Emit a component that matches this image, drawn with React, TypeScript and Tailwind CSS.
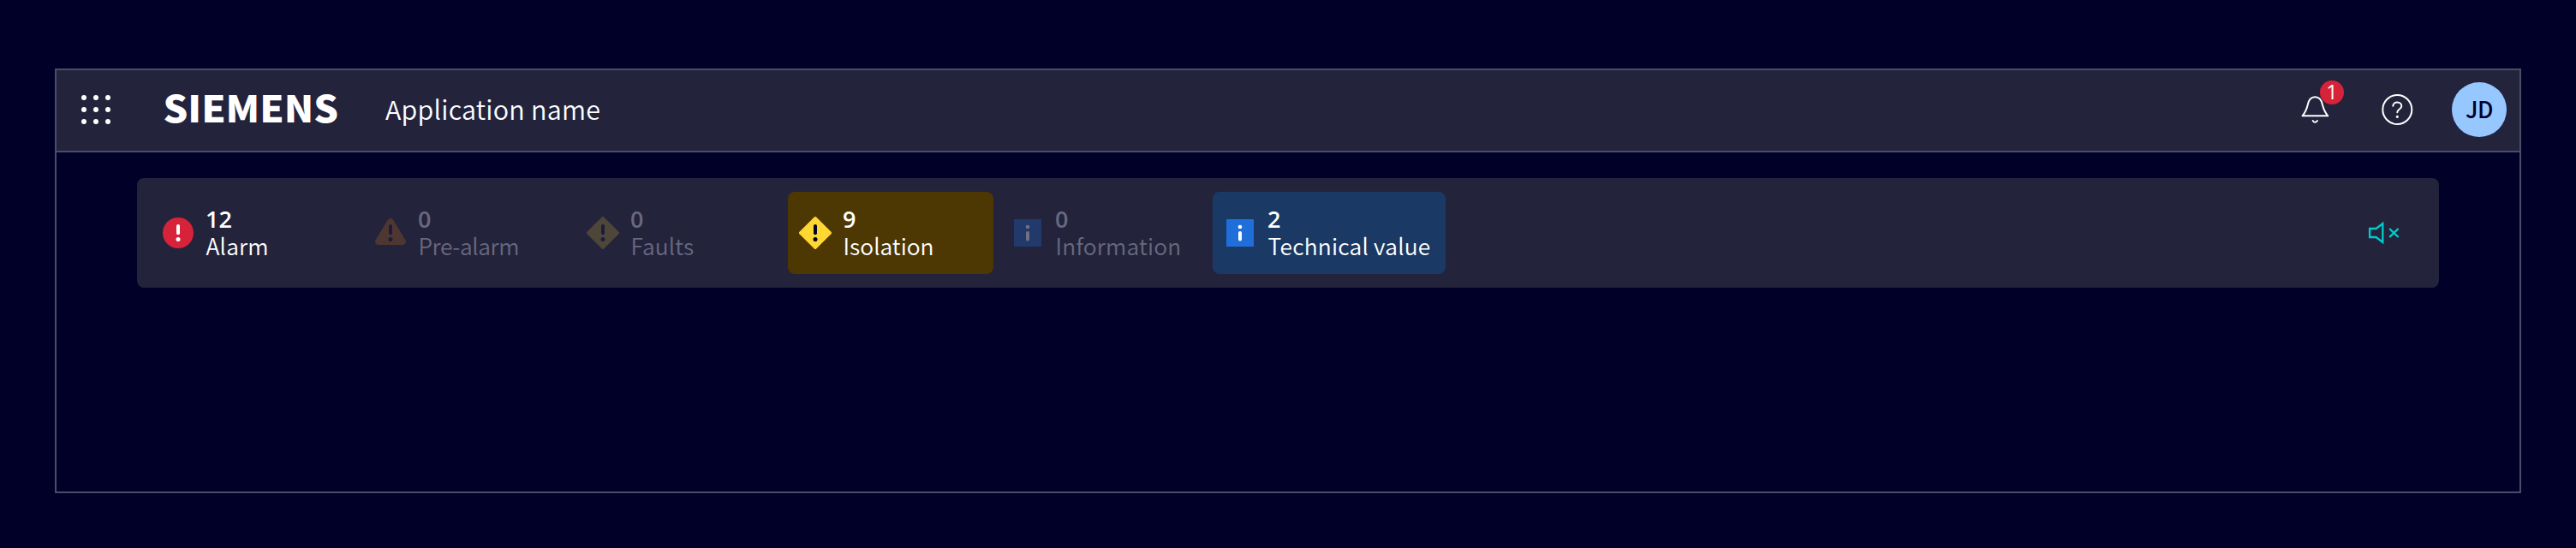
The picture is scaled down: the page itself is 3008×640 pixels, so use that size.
import type { ReactNode } from "react";

function Bang({ fill }: { fill: string }) {
  return (
    <>
      <rect x="22" y="14" width="4" height="12.3" rx="2" fill={fill} />
      <circle cx="24" cy="31.4" r="2.5" fill={fill} />
    </>
  );
}

function Icon({ children }: { children: ReactNode }) {
  return (
    <svg className="size-12 shrink-0" viewBox="0 0 48 48" fill="none">
      {children}
    </svg>
  );
}

function CircleAlert() {
  return (
    <Icon>
      <circle cx="24" cy="24" r="18" fill="#d72339" />
      <Bang fill="#ffffff" />
    </Icon>
  );
}

function TriangleAlert() {
  return (
    <Icon>
      <path
        d="M20.9 8.7a3.7 3.7 0 0 1 6.2 0l14.2 23.4c1.6 2.8 0 5.9-3.1 5.9H9.8c-3.1 0-4.7-3.1-3.1-5.9z"
        fill="#4f3731"
      />
      <Bang fill="#1e1c3a" />
    </Icon>
  );
}

function Diamond({ fill, mark }: { fill: string; mark: string }) {
  return (
    <Icon>
      <path
        d="M22.8 5.5a1.7 1.7 0 0 1 2.4 0l17.3 17.3a1.7 1.7 0 0 1 0 2.4L25.2 42.5a1.7 1.7 0 0 1-2.4 0L5.5 25.2a1.7 1.7 0 0 1 0-2.4z"
        fill={fill}
      />
      <Bang fill={mark} />
    </Icon>
  );
}

function SquareInfo({ fill, mark }: { fill: string; mark: string }) {
  return (
    <Icon>
      <rect x="8" y="8" width="32" height="32" rx="1" fill={fill} />
      <circle cx="24" cy="17" r="2.3" fill={mark} />
      <rect x="22" y="22" width="4" height="11.5" rx="2" fill={mark} />
    </Icon>
  );
}

type Tile = { icon: ReactNode; count: number; label: string; box: string; tracking: string };

const tiles: Tile[] = [
  { icon: <CircleAlert />, count: 12, label: "Alarm", box: "w-60 text-white", tracking: "tracking-[0.2px]" },
  { icon: <TriangleAlert />, count: 0, label: "Pre-alarm", box: "w-60 text-[#68687f]", tracking: "tracking-[-0.4px]" },
  { icon: <Diamond fill="#4f463a" mark="#1e1c3a" />, count: 0, label: "Faults", box: "w-60 text-[#68687f]", tracking: "tracking-[0.1px]" },
  { icon: <Diamond fill="#ffd732" mark="#000028" />, count: 9, label: "Isolation", box: "w-60 text-white bg-[#4d3702]", tracking: "tracking-normal" },
  { icon: <SquareInfo fill="#223a6b" mark="#71717f" />, count: 0, label: "Information", box: "w-60 text-[#68687f]", tracking: "tracking-[0.2px]" },
  { icon: <SquareInfo fill="#206ed9" mark="#ffffff" />, count: 2, label: "Technical value", box: "w-[272px] text-white bg-[#1a3965]", tracking: "tracking-[0.2px]" },
];

function Header() {
  return (
    <header className="flex h-24 shrink-0 items-center border-b-2 border-[#4c4c68] bg-[#23233c] pb-0.5">
      <svg className="ml-[22px] size-12" viewBox="0 0 48 48" fill="#ffffff">
        {[10, 24, 38].map((y) => [10, 24, 38].map((x) => <circle key={`${x}-${y}`} cx={x} cy={y} r="3" />))}
      </svg>
      <svg className="ml-[54px] h-[72px] w-[208px]" viewBox="0 0 208 72" role="img" aria-label="SIEMENS">
        <text
          x="0.5"
          y="51.3"
          fill="#ffffff"
          textLength="204.5"
          lengthAdjust="spacingAndGlyphs"
          className="text-[42.4px] font-black"
        >
          SIEMENS
        </text>
      </svg>
      <h1 className="ml-[52px] pb-[3px] text-[30.5px] leading-10 font-[350] tracking-[0.22px] text-white">
        Application name
      </h1>
      <div className="ml-auto flex items-center pr-[15px]">
        <div className="relative size-12">
          <svg
            className="size-12"
            viewBox="0 0 48 48"
            fill="none"
            stroke="#ffffff"
            strokeWidth="2"
            strokeLinejoin="round"
            strokeLinecap="round"
          >
            <path d="M9.5 31.3H39.3C35.5 27 34.3 23.5 33 18.5C31.8 12.5 29 9.3 24.3 9.3S16.9 12.5 15.7 18.5C14.5 23.5 13.3 27 9.5 31.3Z" />
            <path d="M21.7 37C22.6 39.3 26 39.3 26.9 37" />
          </svg>
          <span className="absolute -top-[10px] left-[30px] flex size-7 items-center justify-center rounded-full bg-[#d72339] pb-[2px] font-['Open_Sans',sans-serif] text-[23.5px] leading-7 font-normal text-white">
            1
          </span>
        </div>
        <svg className="ml-12 size-12" viewBox="0 0 48 48" fill="none" stroke="#ffffff" strokeWidth="2" strokeLinecap="round">
          <circle cx="24.3" cy="24" r="17" />
          <path d="M19.3 19.8C19.4 17.2 21.6 15.5 24.3 15.5C27.2 15.5 29.3 17.4 29.3 19.9C29.3 23.5 24.3 23.4 24.3 27.2" />
          <circle cx="24.3" cy="32.3" r="0.8" fill="#ffffff" strokeWidth="1.6" />
        </svg>
        <div className="ml-10 flex size-16 items-center justify-center rounded-full bg-[#97c7ff] pb-[2px] text-[26.4px] leading-8 font-medium tracking-[-0.5px] text-[#000028]">
          JD
        </div>
      </div>
    </header>
  );
}

export default function App() {
  return (
    <div className="h-[640px] w-[3008px] bg-[#000028] px-16 pt-20 font-['Noto_Sans_CJK_SC',sans-serif]">
      <div className="flex h-[496px] flex-col border-2 border-[#4c4c68]">
        <Header />
        <main className="px-[94px] pt-[30px]">
          <section className="flex h-32 items-center rounded-lg bg-[#23233c] p-4">
            <div className="flex gap-2">
              {tiles.map((t) => (
                <div key={t.label} className={`flex h-24 items-center rounded-lg pl-2 ${t.box}`}>
                  {t.icon}
                  <div className="ml-2 pb-[3px] leading-8 whitespace-nowrap">
                    <div className="-mb-px pt-px font-['Open_Sans',sans-serif] text-[27px] leading-8 font-semibold">
                      {t.count}
                    </div>
                    <div className={`pl-[0.5px] text-[26.4px] leading-8 font-[350] ${t.tracking}`}>{t.label}</div>
                  </div>
                </div>
              ))}
            </div>
            <svg
              className="mr-6 ml-auto size-12"
              viewBox="0 0 48 48"
              fill="none"
              stroke="#00cccc"
              strokeWidth="2.3"
            >
              <path d="M7.1 19H14.6L22.3 13V35L14.6 29H7.1Z" />
              <path d="M30.2 19L40.6 29M40.6 19L30.2 29" strokeWidth="2.4" />
            </svg>
          </section>
        </main>
      </div>
    </div>
  );
}
